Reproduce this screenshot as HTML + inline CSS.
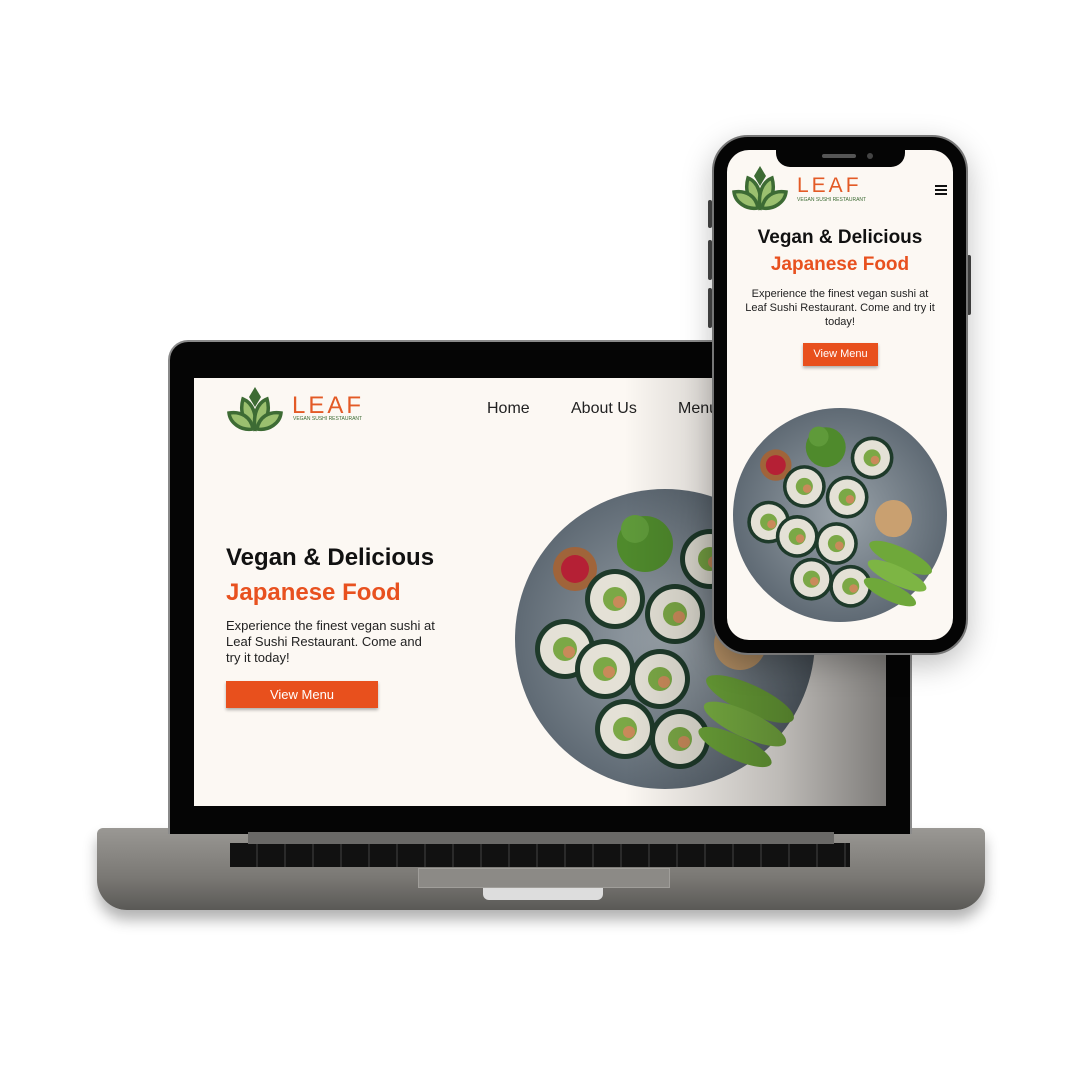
<!DOCTYPE html>
<html><head><meta charset="utf-8"><style>
*{margin:0;padding:0;box-sizing:border-box}
body{width:1080px;height:1080px;background:#fff;position:relative;overflow:hidden;font-family:"Liberation Sans",sans-serif}
.abs{position:absolute}
.h1{font-weight:bold;color:#111}
.or{color:#e8511f;font-weight:bold}
.btn{background:#e8501d;color:#fff;text-align:center;box-shadow:0 2px 3px rgba(0,0,0,.3)}
.nav{font-size:16px;color:#222}
</style></head><body>
<svg width="0" height="0" style="position:absolute"><defs>
<g id="logo">
<path d="M28 2 L34 12 L28 22 L22 12Z" fill="#3d6b34"/>
<path d="M28 44 C18 40 12 28 16 14 C26 18 30 30 28 44Z" fill="#9bc06f" stroke="#3d6b34" stroke-width="3.5"/>
<path d="M28 44 C38 40 44 28 40 14 C30 18 26 30 28 44Z" fill="#9bc06f" stroke="#3d6b34" stroke-width="3.5"/>
<path d="M26 44 C14 46 3 38 2 28 C14 26 24 32 26 44Z" fill="#9bc06f" stroke="#3d6b34" stroke-width="3.5"/>
<path d="M30 44 C42 46 53 38 54 28 C42 26 32 32 30 44Z" fill="#9bc06f" stroke="#3d6b34" stroke-width="3.5"/>
</g>
<radialGradient id="plate" cx="50%" cy="50%" r="50%"><stop offset="0" stop-color="#9aa3aa"/><stop offset="1" stop-color="#5f6a74"/></radialGradient>
<g id="roll"><circle r="30" fill="#1e3a2a"/><circle r="25" fill="#e4e1d6"/><circle r="12" fill="#7ba846"/><circle cx="4" cy="3" r="6" fill="#c98a5a"/></g>
<g id="sushi">
<circle cx="0" cy="0" r="150" fill="url(#plate)"/>
<circle cx="-20" cy="-95" r="28" fill="#4f8a2c"/><circle cx="-30" cy="-110" r="14" fill="#5f9a3a"/>
<circle cx="-90" cy="-70" r="22" fill="#a0643a"/><circle cx="-90" cy="-70" r="14" fill="#b52035"/>
<use href="#roll" x="-50" y="-40"/>
<use href="#roll" x="10" y="-25"/>
<use href="#roll" x="-100" y="10"/>
<use href="#roll" x="-60" y="30"/>
<use href="#roll" x="-5" y="40"/>
<use href="#roll" x="-40" y="90"/>
<use href="#roll" x="15" y="100"/>
<use href="#roll" x="45" y="-80"/>
<circle cx="75" cy="5" r="26" fill="#c9a070"/>
<ellipse cx="85" cy="60" rx="48" ry="14" fill="#6fa83a" transform="rotate(25 85 60)"/>
<ellipse cx="80" cy="85" rx="45" ry="13" fill="#7db544" transform="rotate(25 80 85)"/>
<ellipse cx="70" cy="108" rx="40" ry="12" fill="#6fa83a" transform="rotate(25 70 108)"/>
</g></defs></svg>

<!-- laptop -->
<div class="abs" style="left:97px;top:828px;width:888px;height:82px;background:linear-gradient(#9a9894,#7a7874 60%,#5a5956);border-radius:6px 6px 30px 30px;box-shadow:0 10px 14px rgba(0,0,0,.3)"></div>
<div class="abs" style="left:230px;top:843px;width:620px;height:24px;background:repeating-linear-gradient(90deg,#111 0 26px,#2a2a2a 26px 28px)"></div>
<div class="abs" style="left:418px;top:868px;width:252px;height:20px;background:#8c8a86;border:1px solid #a09e9a"></div>
<div class="abs" style="left:483px;top:888px;width:120px;height:12px;background:#ddd;border-radius:0 0 6px 6px"></div>
<div class="abs" style="left:168px;top:340px;width:744px;height:494px;background:#050505;border-radius:20px 20px 0 0;border:2px solid #8a8a8a;border-bottom:none"></div>
<div class="abs" style="left:248px;top:832px;width:586px;height:12px;background:#6a6967"></div>
<div class="abs" style="left:194px;top:378px;width:692px;height:428px;background:#fcf8f3;overflow:hidden">
 <svg class="abs" style="left:32px;top:7px" width="58" height="48" viewBox="0 0 56 48"><use href="#logo"/></svg>
 <div class="abs" style="left:98px;top:14px;font-family:'Liberation Sans',sans-serif;font-size:24px;letter-spacing:3px;color:#e35a26">LEAF</div>
 <div class="abs" style="left:99px;top:38px;font-size:5px;color:#3d6b34">VEGAN SUSHI RESTAURANT</div>
 <div class="abs nav" style="left:293px;top:22px">Home</div>
 <div class="abs nav" style="left:377px;top:22px">About Us</div>
 <div class="abs nav" style="left:484px;top:22px">Menu</div>
 <div class="abs h1" style="left:32px;top:166px;font-size:24px">Vegan &amp; Delicious</div>
 <div class="abs or" style="left:32px;top:201px;font-size:24px">Japanese Food</div>
 <div class="abs" style="left:32px;top:240px;width:210px;font-size:13px;line-height:16px;color:#222">Experience the finest vegan sushi at Leaf Sushi Restaurant. Come and try it today!</div>
 <div class="abs btn" style="left:32px;top:303px;width:152px;height:27px;font-size:13px;line-height:27px">View Menu</div>
 <svg class="abs" style="left:321px;top:109px" width="300" height="304" viewBox="-150 -150 300 300"><use href="#sushi"/></svg>
 <div class="abs" style="left:430px;top:0;width:262px;height:428px;background:linear-gradient(90deg,rgba(0,0,0,0),rgba(0,0,0,.25) 60%,rgba(0,0,0,.5))"></div>
</div>

<!-- phone -->
<div class="abs" style="left:708px;top:200px;width:4px;height:28px;background:#444;border-radius:2px"></div>
<div class="abs" style="left:708px;top:240px;width:4px;height:40px;background:#444;border-radius:2px"></div>
<div class="abs" style="left:708px;top:288px;width:4px;height:40px;background:#444;border-radius:2px"></div>
<div class="abs" style="left:967px;top:255px;width:4px;height:60px;background:#444;border-radius:2px"></div>
<div class="abs" style="left:712px;top:135px;width:256px;height:520px;background:#050505;border-radius:36px;border:2px solid #777;box-shadow:0 10px 30px rgba(0,0,0,.25)"></div>
<div class="abs" style="left:727px;top:150px;width:226px;height:490px;background:#fcf8f3;border-radius:22px;overflow:hidden">
 <svg class="abs" style="left:3px;top:14px" width="60" height="48" viewBox="0 0 56 48"><use href="#logo"/></svg>
 <div class="abs" style="left:70px;top:24px;font-family:'Liberation Sans',sans-serif;font-size:21px;letter-spacing:3px;color:#e35a26">LEAF</div>
 <div class="abs" style="left:70px;top:47px;font-size:5px;color:#3d6b34">VEGAN SUSHI RESTAURANT</div>
 <div class="abs" style="left:208px;top:35px;width:12px;height:10px;border-top:2px solid #111;border-bottom:2px solid #111"></div>
 <div class="abs" style="left:208px;top:39px;width:12px;height:2px;background:#111"></div>
 <div class="abs h1" style="left:0;top:77px;width:226px;text-align:center;font-size:19px">Vegan &amp; Delicious</div>
 <div class="abs or" style="left:0;top:104px;width:226px;text-align:center;font-size:19px">Japanese Food</div>
 <div class="abs" style="left:15px;top:137px;width:196px;text-align:center;font-size:11px;line-height:14px;color:#222">Experience the finest vegan sushi at Leaf Sushi Restaurant. Come and try it today!</div>
 <div class="abs btn" style="left:76px;top:193px;width:75px;height:23px;font-size:11px;line-height:23px">View Menu</div>
 <svg class="abs" style="left:6px;top:255px" width="214" height="220" viewBox="-150 -150 300 300"><use href="#sushi"/></svg>
</div>
<div class="abs" style="left:776px;top:148px;width:129px;height:19px;background:#050505;border-radius:0 0 14px 14px"></div>
<div class="abs" style="left:822px;top:154px;width:34px;height:4px;background:#555;border-radius:2px"></div>
<div class="abs" style="left:867px;top:153px;width:6px;height:6px;background:#444;border-radius:50%"></div>
</body></html>
